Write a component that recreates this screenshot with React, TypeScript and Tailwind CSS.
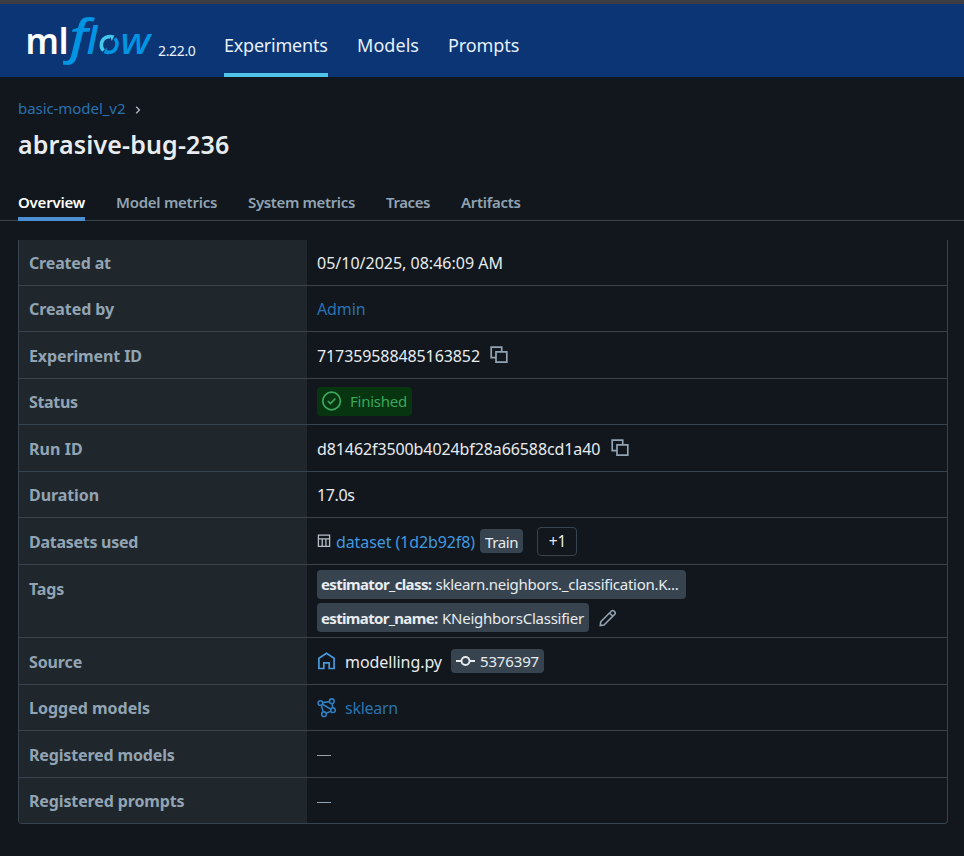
import type { ReactNode } from "react";

function Logo() {
  return (
    <svg width="128" height="56" viewBox="26 13 128 56" className="block overflow-visible" aria-label="mlflow">
      <g fontFamily="'Noto Sans', sans-serif">
        <text x="25.6" y="54.3" fontSize="36" fontWeight="600" fill="#fff" textLength="33.4" lengthAdjust="spacingAndGlyphs">m</text>
        <text x="58.4" y="54.3" fontSize="36" fontWeight="600" fill="#fff">l</text>
        <text transform="translate(69.2 54.3) scale(1.2 1)" fontSize="47" fontStyle="italic" fontWeight="500" fill="#0194e2">f</text>
        <text x="86.8" y="54.3" fontSize="37" fontStyle="italic" fontWeight="600" fill="#0194e2">l</text>
        <text x="120.4" y="54.3" fontSize="36" fontStyle="italic" fontWeight="500" fill="#0194e2" textLength="30" lengthAdjust="spacingAndGlyphs">w</text>
      </g>
      <g fill="none" strokeWidth="3.6">
        <path d="M103.6 50.6C99.6 46.6 101 38.4 107.4 36.9c1.2-.2 2.2-.1 3 .1" stroke="#43c9ed" />
        <path d="M114.8 38.4c4.2 4.2 2 12.6-4.6 13.8-1.2.1-2.2 0-3-.2" stroke="#0194e2" />
      </g>
      <path d="M109.4 34.4l5 1-2.6 5.6z" fill="#43c9ed" />
      <path d="M108.6 54.4l-5-1.2 2.6-5.6z" fill="#0194e2" />
    </svg>
  );
}

function CopyIcon({ gap }: { gap: string }) {
  return (
    <svg width="18" height="18" viewBox="0 0 18 18" fill="none" stroke="#92a4b3" strokeWidth="1.7" className={`shrink-0 ${gap}`}>
      <path d="M5.5 11.7H1.2V1.2h10.5v4.3M6 5.9h10.8v10.3H6z" />
    </svg>
  );
}

interface RowProps {
  name: string;
  tracking: string;
  h: string;
  place?: string;
  children: ReactNode;
}

function Row({ name, tracking, h, place = "items-center", children }: RowProps) {
  return (
    <div className={`flex border-b border-[#37444f] last:border-b-0 ${h}`}>
      <div className={`flex w-[288px] shrink-0 bg-[#1f272d] pl-[10px] font-bold text-[#92a4b3] ${tracking} ${place}`}>{name}</div>
      <div className="flex min-w-0 flex-1 items-center pl-[10px]">{children}</div>
    </div>
  );
}

export default function App() {
  return (
    <div className="h-[856px] w-full overflow-hidden bg-[#11171c] font-['Noto_Sans',sans-serif] text-[#e8ecf0]">
      <div className="h-[4px] bg-[#3c3e43]" />
      <header className="flex h-[73px] bg-[#0b3574]">
        <div className="ml-[26px] mt-[9px] w-[128px]"><Logo /></div>
        <div className="ml-[4px] mt-[37px] w-[66px] text-[14px] leading-[20px] tracking-[-0.35px] text-[#e7f1fb]">2.22.0</div>
        <nav className="flex gap-[29px] text-[18px] leading-[24px] text-[#e7f1fb]">
          <div className="w-[104px] border-b-4 border-[#4fc3e8] pt-[29px] tracking-[-0.22px]">Experiments</div>
          <div className="w-[62px] pt-[29px] tracking-[0.05px]">Models</div>
          <div className="pt-[29px] tracking-[-0.1px]">Prompts</div>
        </nav>
      </header>

      <div className="flex h-[43px] items-center pl-[18px] pt-[19px] text-[15px] leading-[22px]">
        <span className="w-[117px] tracking-[-0.06px] text-[#2a72b0]">basic-model_v2</span>
        <svg width="6" height="8" viewBox="0 0 6 8" fill="none" stroke="#a9b6c0" strokeWidth="1.4" className="mt-[4px]"><path d="M1.2.8 4.4 4 1.2 7.2" /></svg>
      </div>
      <h1 className="mt-[6px] h-[36px] pl-[18px] text-[25px] font-semibold leading-[36px] tracking-[0.14px]">abrasive-bug-236</h1>

      <div className="mt-[29px] flex h-[30px] gap-[31px] border-b border-[#37444f] pl-[18px] text-[15px] font-semibold leading-[22px] text-[#92a4b3]">
        <div className="h-[30px] w-[67px] border-b-4 border-[#4a90d2] tracking-[-0.22px] text-white">Overview</div>
        <div className="w-[101px] whitespace-nowrap tracking-[-0.26px]">Model metrics</div>
        <div className="w-[107px] whitespace-nowrap tracking-[-0.36px]">System metrics</div>
        <div className="w-[44px] tracking-[-0.4px]">Traces</div>
        <div className="tracking-[-0.3px]">Artifacts</div>
      </div>

      <div className="ml-[18px] mt-[19px] w-[930px] overflow-hidden rounded-b-[4px] border border-t-0 border-[#37444f] text-[16px] leading-[22px]">
        <Row name="Created at" tracking="tracking-[-0.17px]" h="h-[46px]"><span>05/10/2025, 08:46:09 AM</span></Row>
        <Row name="Created by" tracking="tracking-[-0.1px]" h="h-[46px]"><span className="tracking-[-0.1px] text-[#2a72b0]">Admin</span></Row>
        <Row name="Experiment ID" tracking="tracking-[-0.12px]" h="h-[47px]" place="items-center pt-[2px]">
          <span className="pt-[2px] tracking-[-0.1px]">717359588485163852</span><CopyIcon gap="ml-[10px]" />
        </Row>
        <Row name="Status" tracking="tracking-[-0.35px]" h="h-[46px]">
          <span className="flex h-[29px] w-[95px] items-center rounded bg-[#06350f] pl-[5px] text-[15px] tracking-[-0.24px] text-[#3ba65e]">
            <svg width="20" height="20" viewBox="0 0 20 20" fill="none" stroke="currentColor" strokeWidth="1.7" className="mb-px mr-[8px]">
              <circle cx="9.6" cy="10" r="8.8" /><path d="m5.8 10 2.6 2.5 4.9-4.9" />
            </svg>
            <span className="pb-[2px]">Finished</span>
          </span>
        </Row>
        <Row name="Run ID" tracking="tracking-[0.05px]" h="h-[47px]" place="items-center pt-[2px]">
          <span className="pt-[2px] tracking-[-0.1px]">d81462f3500b4024bf28a66588cd1a40</span><CopyIcon gap="ml-[10.5px]" />
        </Row>
        <Row name="Duration" tracking="tracking-[-0.08px]" h="h-[46px]"><span className="tracking-[-0.4px]">17.0s</span></Row>
        <Row name="Datasets used" tracking="tracking-[-0.28px]" h="h-[47px]" place="items-center pt-[2px]">
          <svg width="14" height="14" viewBox="0 0 14 14" fill="none" stroke="#b4bfc8" strokeWidth="1.3" className="mr-[5px]">
            <path d="M1.4 1.2h11.2v11.2H1.4zM1.4 4.8h11.2M5.2 4.8v7.6M8.9 4.8v7.6" />
          </svg>
          <span className="w-[139px] whitespace-nowrap pt-[2px] tracking-[-0.1px] text-[#4299e0]">dataset (1d2b92f8)</span>
          <span className="ml-[5px] flex h-[24px] w-[43px] items-center justify-center rounded bg-[#37444f] pt-px text-[15px] tracking-[-0.4px]">Train</span>
          <span className="ml-[14px] flex h-[29px] w-[40px] items-center justify-center rounded border border-[#37444f] pl-px text-[15.5px]">+1</span>
        </Row>
        <Row name="Tags" tracking="tracking-[-0.15px]" h="h-[73px]" place="items-start pt-[13px]">
          <div className="flex flex-col gap-[4px] text-[15px]">
            <span className="flex h-[29px] w-[369px] items-center whitespace-nowrap rounded bg-[#37444f] pb-[2px] pl-[4px]">
              <b className="w-[114.5px] font-bold tracking-[-0.62px]">estimator_class:</b><span className="tracking-[-0.27px]">sklearn.neighbors._classification.K...</span>
            </span>
            <div className="flex items-center">
              <span className="flex h-[29px] w-[272px] items-center whitespace-nowrap rounded bg-[#37444f] pl-[4px]">
                <b className="w-[121px] font-bold tracking-[-0.66px]">estimator_name:</b><span className="tracking-[-0.25px]">KNeighborsClassifier</span>
              </span>
              <svg width="18" height="18" viewBox="0 0 18 18" fill="none" stroke="#92a4b3" strokeWidth="1.6" className="ml-[9.5px]">
                <path d="m1.3 16.5.4-3.7L12.5 2q1.2-1 2.4 0l.9.9q1 1.2 0 2.4L5 16.1zM10.5 4l3.3 3.3" />
              </svg>
            </div>
          </div>
        </Row>
        <Row name="Source" tracking="tracking-[-0.12px]" h="h-[47px]" place="items-center pt-[2px]">
          <svg width="19" height="18" viewBox="0 0 19 18" fill="none" stroke="#4a98dc" strokeWidth="1.7">
            <path d="M1.9 6.3 9.5 1.2l7.6 5.1v10.2h-4.9v-5.7H6.8v5.7H1.9z" />
          </svg>
          <span className="ml-[9px] w-[97px] pt-[2px] tracking-[-0.05px]">modelling.py</span>
          <span className="ml-[9px] flex h-[24px] w-[93px] items-center rounded bg-[#37444f] pl-[5px] text-[15px] tracking-[-0.15px]">
            <svg width="19" height="12" viewBox="0 0 19 12" fill="none" stroke="currentColor" strokeWidth="1.9" className="mr-[5px]">
              <circle cx="9.5" cy="6" r="4" /><path d="M0 6h5.5M13.5 6H19" />
            </svg>
            5376397
          </span>
        </Row>
        <Row name="Logged models" tracking="tracking-[0px]" h="h-[46px]">
          <svg width="19" height="20" viewBox="0 0 19 20" fill="none" stroke="#2f7cbf" strokeWidth="1.6">
            <circle cx="3.4" cy="5" r="2.3" /><circle cx="14.8" cy="3.2" r="2.3" /><circle cx="16" cy="12.2" r="2.3" /><circle cx="7" cy="16.2" r="2.3" />
            <path d="m5.7 4.6 6.8-1M15.2 5.5l.5 4.4M13.9 13.2l-4.8 2M4.2 7.2l2.1 6.7M5.4 6.2l8.6 5" />
          </svg>
          <span className="ml-[9px] tracking-[-0.28px] text-[#2a72b0]">sklearn</span>
        </Row>
        <Row name="Registered models" tracking="tracking-[-0.15px]" h="h-[47px]" place="items-center pt-[2px]"><span className="mt-[2px] h-px w-[14px] bg-[#92a4b3]" /></Row>
        <Row name="Registered prompts" tracking="tracking-[-0.13px]" h="h-[45px]" place="items-center pt-px"><span className="mt-[3px] h-px w-[14px] bg-[#92a4b3]" /></Row>
      </div>
    </div>
  );
}
